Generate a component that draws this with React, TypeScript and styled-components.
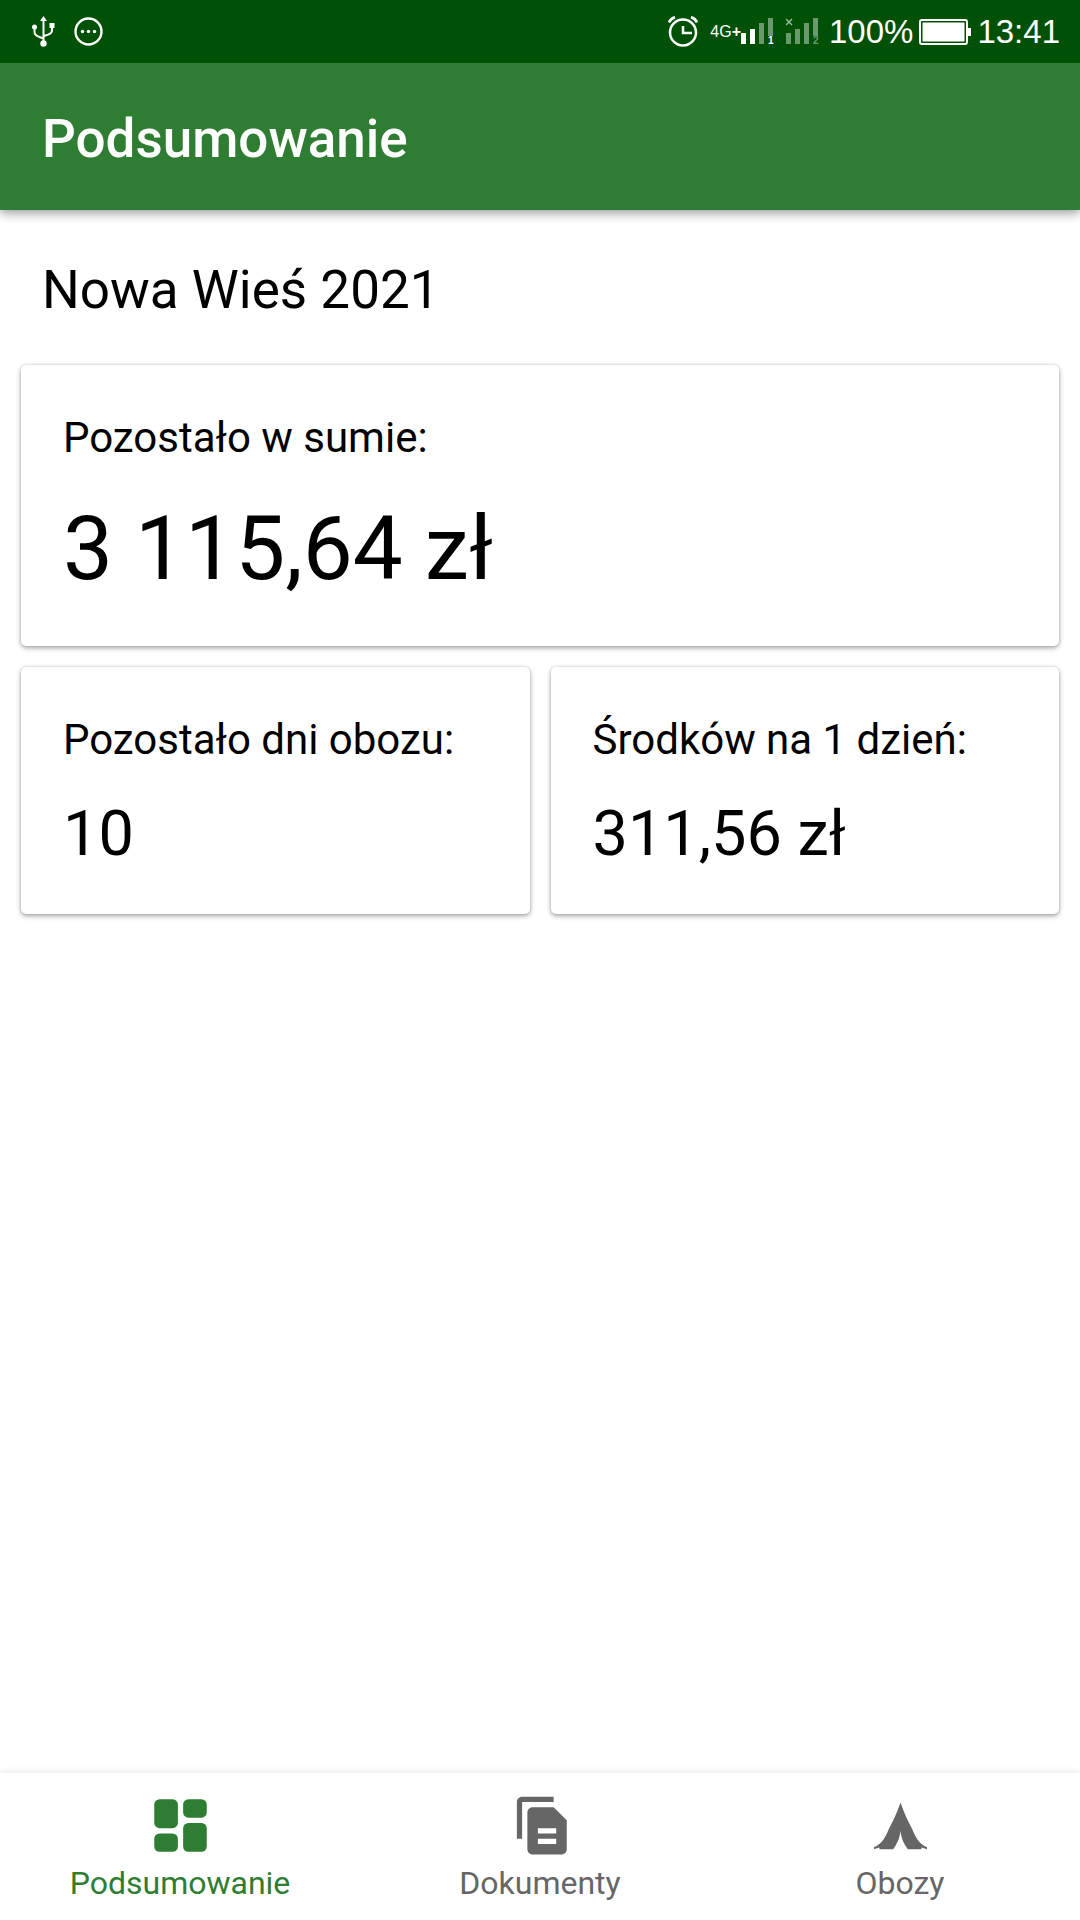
import React from "react";
import styled, { createGlobalStyle } from "styled-components";

const GlobalStyle = createGlobalStyle`
  *, *::before, *::after { box-sizing: border-box; }
  body {
    margin: 0;
    background: #fff;
    color: #000;
    font-family: Roboto, "Noto Sans", sans-serif;
  }
  h1, h2, p, dl, dt, dd { margin: 0; font-weight: 400; }
`;

const Screen = styled.div`
  display: flex;
  flex-direction: column;
  min-height: 100vh;
`;

const StatusBar = styled.div`
  position: relative;
  z-index: 1;
  display: flex;
  align-items: center;
  justify-content: space-between;
  height: 63px;
  padding: 0 20px 0 32px;
  background: #005005;
  color: #fff;
  font-family: "Liberation Sans", Arial, sans-serif;
`;

const StatusGroup = styled.div<{ $gap: number }>`
  display: flex;
  align-items: center;
  gap: ${(p) => p.$gap}px;

  svg { display: block; flex: none; }
`;

const StatusText = styled.span`
  font-size: 33px;
  line-height: 40px;
`;

const NetworkType = styled.span`
  font-size: 16px;
  line-height: 20px;
`;

const NetworkPlus = styled.b`
  font-size: 16px;
`;

const AppBar = styled.header`
  position: relative;
  display: flex;
  align-items: center;
  height: 147px;
  padding: 4px 42px 0;
  background: #2e7d32;
  color: #fff;
  box-shadow: 0 3px 10px rgba(0, 0, 0, 0.4);
`;

const Title = styled.h1`
  && { font-weight: 500; }
  font-size: 53px;
  line-height: 62px;
`;

const Main = styled.main`
  display: flex;
  flex: 1;
  flex-direction: column;
  gap: 21px;
  padding: 21px;
`;

const CampName = styled.h2`
  padding: 21px 21px 16px;
  font-size: 53px;
  line-height: 76px;
`;

const Stats = styled.dl`
  display: grid;
  grid-template-columns: 1fr 1fr;
  gap: 21px;
`;

const Card = styled.div<{ $wide?: boolean }>`
  grid-column: ${(p) => (p.$wide ? "1 / -1" : "auto")};
  display: flex;
  flex-direction: column;
  gap: 24px;
  padding: 42px;
  border-radius: 5px;
  background: #fff;
  box-shadow: 0 2px 5px rgba(0, 0, 0, 0.34), 0 0 3px rgba(0, 0, 0, 0.14);
`;

const Label = styled.dt`
  font-size: 42px;
  line-height: 62px;
`;

const Value = styled.dd<{ $large?: boolean }>`
  font-size: ${(p) => (p.$large ? 89 : 63)}px;
  line-height: ${(p) => (p.$large ? 111 : 77)}px;
`;

const BottomNav = styled.nav`
  display: grid;
  grid-template-columns: repeat(3, 1fr);
  height: 147px;
  background: #fff;
  box-shadow: 0 0 8px rgba(0, 0, 0, 0.12);
`;

const NavItem = styled.a<{ $active?: boolean }>`
  display: flex;
  flex-direction: column;
  align-items: center;
  padding-top: 21px;
  color: ${(p) => (p.$active ? "#2e7d32" : "#666")};
  font-size: 32px;
  line-height: 52px;
  text-decoration: none;

  svg { display: block; fill: currentColor; }
`;

const UsbIcon = () => (
  <svg width="23" height="31" viewBox="0 0 23 31" fill="none" stroke="#fff" strokeWidth="2">
    <path d="M11.500 4v22M2.500 12v4c0 3 2 4 5 5l4 1.500M20 11v3c0 3-2 4-4 4.600l-4.500 1.700" />
    <path d="M11.500 0l3.500 5H8z" fill="#fff" stroke="none" />
    <circle cx="2.500" cy="11" r="2.500" fill="#fff" stroke="none" />
    <circle cx="11.500" cy="27.500" r="3.200" fill="#fff" stroke="none" />
    <path d="M17.500 7h5v5h-5z" fill="#fff" stroke="none" />
  </svg>
);

const ChatIcon = () => (
  <svg width="29" height="29" viewBox="0 0 29 29" fill="#fff">
    <circle cx="14.500" cy="14.500" r="13" fill="none" stroke="#fff" strokeWidth="2.400" />
    <circle cx="8.500" cy="14.500" r="1.700" />
    <circle cx="14.500" cy="14.500" r="1.700" />
    <circle cx="20.500" cy="14.500" r="1.700" />
  </svg>
);

const AlarmIcon = () => (
  <svg width="30" height="31" viewBox="0 0 30 31" fill="none" stroke="#fff">
    <circle cx="15" cy="16.500" r="13" strokeWidth="2.500" />
    <path d="M15 10v7h9" strokeWidth="2.500" />
    <path d="M1 6.500C2 4 4 2 7 1.200M29 6.500C28 4 26 2 23 1.200" strokeWidth="2.600" />
  </svg>
);

const bars = [
  { x: 0, y: 15, h: 11 },
  { x: 9, y: 11, h: 15 },
  { x: 18, y: 5, h: 21 },
  { x: 27, y: 0, h: 18 },
];

const SignalIcon = ({ slot, level, missing }: { slot: number; level: number; missing?: boolean }) => (
  <svg width="33" height="27" viewBox="0 0 33 27" fill="#fff">
    {bars.map((b, i) => (
      <rect key={b.x} x={b.x} y={b.y} width="5" height={b.h} opacity={i < level ? 1 : 0.42} />
    ))}
    {missing && <path d="M0 1l6 6M6 1l-6 6" stroke="#fff" strokeWidth="1.500" opacity="0.6" />}
    <text x="27" y="26" fontSize="10" fontWeight="700" opacity={missing ? 0.42 : 1}>
      {slot}
    </text>
  </svg>
);

const BatteryIcon = () => (
  <svg width="52" height="26" viewBox="0 0 52 26" fill="#fff">
    <rect x="1" y="1" width="47" height="24" rx="2" fill="none" stroke="#fff" strokeWidth="2" />
    <rect x="3" y="3" width="43" height="20" />
    <rect x="3" y="3" width="43" height="20" fill="none" stroke="#005005" />
    <path d="M49 9h3v8h-3z" />
  </svg>
);

const DashboardIcon = () => (
  <svg width="63" height="63" viewBox="0 0 24 24">
    <rect x="2" y="2" width="9" height="11" rx="2" />
    <rect x="13" y="2" width="9" height="7" rx="2" />
    <rect x="2" y="15" width="9" height="7" rx="2" />
    <rect x="13" y="11" width="9" height="11" rx="2" />
  </svg>
);

const DocumentsIcon = () => (
  <svg width="63" height="63" viewBox="0 0 24 24">
    <path d="M17 1H5c-1.100 0-2 .9-2 2v14h2V3h12z" />
    <path
      fillRule="evenodd"
      d="M17 5H9c-1.100 0-2 .9-2 2v14c0 1.100.9 2 2 2h11c1.100 0 2-.9 2-2V10zM11 13h7v2h-7zM11 17h7v2h-7z"
    />
  </svg>
);

const TentIcon = () => (
  <svg width="63" height="63" viewBox="0 0 24 24">
    <path d="M12 3.200C10.700 7 9.300 10 7.600 13.200C6.200 16.500 4.800 19.200 1.900 20.200V21L4 20.400V21H9.200C10.700 19 11.700 17 12 14C12.300 17 13.300 19 14.800 21H20V20.400L22.100 21V20.200C19.200 19.200 17.800 16.500 16.400 13.200C14.700 10 13.300 7 12 3.200Z" />
  </svg>
);

export default function App() {
  return (
    <>
      <GlobalStyle />
      <Screen>
        <StatusBar>
          <StatusGroup $gap={19}>
            <UsbIcon />
            <ChatIcon />
          </StatusGroup>
          <StatusGroup $gap={10}>
            <StatusGroup $gap={12}>
              <AlarmIcon />
              <StatusGroup $gap={0}>
                <NetworkType>
                  4G<NetworkPlus>+</NetworkPlus>
                </NetworkType>
                <SignalIcon slot={1} level={2} />
              </StatusGroup>
              <SignalIcon slot={2} level={0} missing />
            </StatusGroup>
            <StatusGroup $gap={6}>
              <StatusText>100%</StatusText>
              <BatteryIcon />
              <StatusText>13:41</StatusText>
            </StatusGroup>
          </StatusGroup>
        </StatusBar>
        <AppBar>
          <Title>Podsumowanie</Title>
        </AppBar>
        <Main>
          <CampName>Nowa Wieś 2021</CampName>
          <Stats>
            <Card $wide>
              <Label>Pozostało w sumie:</Label>
              <Value $large>3 115,64 zł</Value>
            </Card>
            <Card>
              <Label>Pozostało dni obozu:</Label>
              <Value>10</Value>
            </Card>
            <Card>
              <Label>Środków na 1 dzień:</Label>
              <Value>311,56 zł</Value>
            </Card>
          </Stats>
        </Main>
        <BottomNav>
          <NavItem href="#podsumowanie" $active aria-current="page">
            <DashboardIcon />
            Podsumowanie
          </NavItem>
          <NavItem href="#dokumenty">
            <DocumentsIcon />
            Dokumenty
          </NavItem>
          <NavItem href="#obozy">
            <TentIcon />
            Obozy
          </NavItem>
        </BottomNav>
      </Screen>
    </>
  );
}
